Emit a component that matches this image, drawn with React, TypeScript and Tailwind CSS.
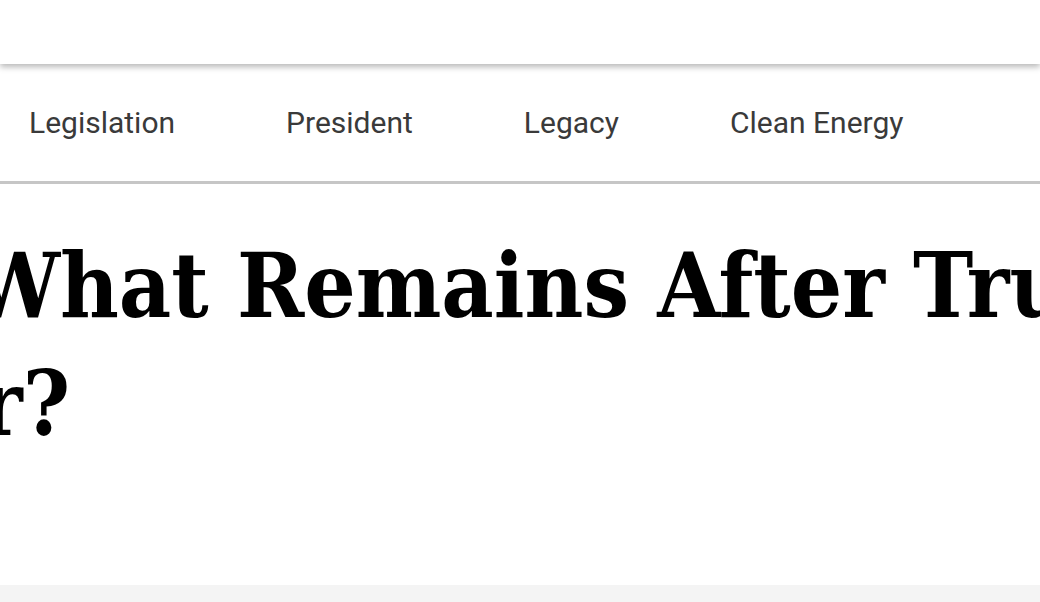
export default function App() {
  const navItems = ["Legislation", "President", "Legacy", "Clean Energy"];

  return (
    <div className="flex h-[602px] w-[1040px] flex-col overflow-hidden bg-white">
      {/* top bar */}
      <header className="relative z-10 h-[64px] shrink-0 bg-white shadow-[0_3px_6px_rgba(0,0,0,0.28)]" />

      {/* topic nav */}
      <nav className="flex h-[120px] shrink-0 items-center gap-[111px] border-b-[3px] border-[#c6c6c6] pl-[29px] font-['Roboto',sans-serif] text-[30px] text-[#3a3a3a]">
        {navItems.map((item) => (
          <a key={item} className="whitespace-nowrap">
            {item}
          </a>
        ))}
      </nav>

      {/* headline */}
      <main className="flex-1 overflow-hidden pt-[42px]">
        <h1 className="-ml-[31px] whitespace-nowrap font-['DejaVu_Serif_Condensed','DejaVu_Serif',serif] text-[90px] font-bold leading-[118px] text-black">
          <span className="block">What Remains After Trump’s</span>
          <span className="block ml-[11px]">r?</span>
        </h1>
      </main>

      <footer className="h-[17px] shrink-0 bg-[#f4f4f4]" />
    </div>
  );
}
